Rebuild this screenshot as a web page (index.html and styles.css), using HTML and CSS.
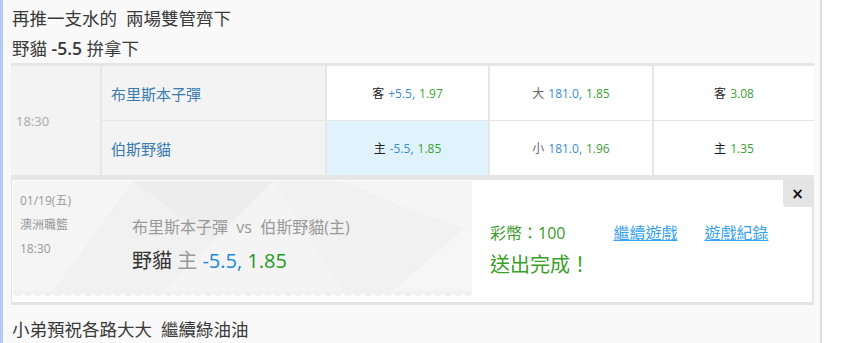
FILE: index.html
```html
<!DOCTYPE html>
<html lang="zh-Hant">
<head>
    <meta charset="UTF-8">
    <meta name="viewport" content="width=device-width, initial-scale=1.0">
    <title>再推一支水的</title>
    <link rel="stylesheet" href="styles.css">
</head>
<body>
    <div class="page">
        <div class="post">
            <p class="line">再推一支水的&nbsp;&nbsp;兩場雙管齊下</p>
            <p class="line">野貓 <b>-5.5</b> 拚拿下</p>

            <!-- game odds -->
            <div class="game">
                <div class="time">18:30</div>
                <div class="team">布里斯本子彈</div>
                <div class="odd">客 <span class="num">+5.5,</span> <span class="val">1.97</span></div>
                <div class="odd"><span class="ou">大</span> <span class="num">181.0,</span> <span class="val">1.85</span></div>
                <div class="odd">客 <span class="val">3.08</span></div>
                <div class="team">伯斯野貓</div>
                <div class="odd picked">主 <span class="num">-5.5,</span> <span class="val">1.85</span></div>
                <div class="odd"><span class="ou">小</span> <span class="num">181.0,</span> <span class="val">1.96</span></div>
                <div class="odd">主 <span class="val">1.35</span></div>
            </div>

            <!-- bet ticket -->
            <div class="ticket">
                <div class="ticket-body">
                    <div class="stub">
                        <svg class="stub-bg" width="459" height="110" viewBox="0 0 459 110">
                            <polygon points="0,0 120,0 40,110 0,110" fill="#f5f5f5"/>
                            <polygon points="120,0 260,0 200,60" fill="#ededed"/>
                            <polygon points="200,60 260,0 330,110 150,110" fill="#f4f4f4"/>
                            <polygon points="330,0 459,0 459,50 400,30" fill="#f5f5f5"/>
                            <polygon points="380,110 459,40 459,110" fill="#f6f6f6"/>
                        </svg>
                        <div class="stub-date">
                            <div>01/19(五)</div>
                            <div class="league">澳洲職籃</div>
                            <div>18:30</div>
                        </div>
                        <div class="stub-main">
                            <div class="match">布里斯本子彈&nbsp;&nbsp;vs&nbsp;&nbsp;伯斯野貓(主)</div>
                            <div class="pick">野貓 <span class="side">主</span> <span class="num">-5.5,</span> <span class="val">1.85</span></div>
                        </div>
                    </div>
                    <div class="result">
                        <div class="result-top">
                            <span class="coins">彩幣：100</span>
                            <a href="#" class="link">繼續遊戲</a>
                            <a href="#" class="link">遊戲紀錄</a>
                        </div>
                        <div class="done">送出完成！</div>
                    </div>
                    <button class="close">×</button>
                </div>
            </div>

            <p class="line">小弟預祝各路大大&nbsp;&nbsp;繼續綠油油</p>
        </div>
    </div>
</body>
</html>
```

FILE: styles.css
```css
body {
    margin: 0;
    background-color: #fff;
    font-family: "Open Sans", "Noto Sans CJK TC", sans-serif;
    color: #333;
}
.page {
    width: 817px;
    min-height: 343px;
    border-left: 3px solid #b5caf3;
    border-right: 2px solid #dedede;
    background-color: #f9f9f9;
}
.post {
    padding: 3px 6px 0 8px;
}
.line {
    margin: 0;
    padding-left: 1px;
    font-size: 17.5px;
    line-height: 30px;
    color: #3a3a3a;
}
.line b {
    font-weight: 600;
}
.game {
    display: grid;
    grid-template-columns: 89px 223px 161px 162px 160px;
    grid-template-rows: 54px 54px;
    column-gap: 2px;
    row-gap: 1px;
    padding: 3px 0 5px;
    background-color: #e6e6e6;
}
.time {
    grid-row: 1 / 3;
    display: flex;
    align-items: center;
    padding-left: 5px;
    background-color: #f3f3f3;
    color: #aaa;
    font-size: 13px;
}
.team {
    display: flex;
    align-items: center;
    padding-left: 9px;
    background-color: #f3f3f3;
    color: #3a7bb0;
    font-size: 15px;
}
.odd {
    display: flex;
    align-items: center;
    justify-content: center;
    gap: 4px;
    background-color: #fff;
    font-size: 12px;
    color: #222;
}
.odd.picked {
    background-color: #e0f3fc;
}
.odd .ou {
    color: #666;
}
.num {
    color: #3a8dd3;
}
.val {
    color: #3a9f35;
}
.ticket {
    padding: 0 2px 3px 1px;
    background-color: #e4e4e4;
}
.ticket-body {
    position: relative;
    display: flex;
    height: 122px;
    padding: 1px 0 0 1px;
    box-sizing: border-box;
    background-color: #fff;
}
.stub {
    position: relative;
    display: flex;
    width: 459px;
    height: 110px;
    background-color: #f1f1f1;
}
.stub::after {
    content: "";
    position: absolute;
    left: 0;
    right: 0;
    bottom: -5px;
    height: 5px;
    background: radial-gradient(circle at 5px 0, #f1f1f1 5px, transparent 5.5px) 0 0 / 10px 5px repeat-x;
}
.stub-bg {
    position: absolute;
    top: 0;
    left: 0;
}
.stub-date {
    position: relative;
    width: 112px;
    padding: 8px 0 0 7px;
    font-size: 12px;
    line-height: 24px;
    color: #999;
}
.stub-main {
    position: relative;
    padding-top: 34px;
}
.match {
    font-size: 16px;
    line-height: 24px;
    color: #999;
}
.pick {
    margin-top: 4px;
    font-size: 20px;
    line-height: 36px;
    color: #333;
}
.pick .side {
    color: #999;
}
.pick .num {
    color: #1a88d6;
}
.pick .val {
    color: #1c9a1c;
}
.result {
    padding: 40px 0 0 18px;
}
.result-top {
    display: flex;
    align-items: center;
    line-height: 24px;
}
.coins {
    font-size: 16px;
    color: #3b9a2a;
}
.link {
    margin-left: 48px;
    font-size: 16px;
    color: #36a3ee;
    text-decoration: underline;
}
.link + .link {
    margin-left: 27px;
}
.done {
    margin-top: 4px;
    font-size: 20px;
    line-height: 32px;
    color: #3aa02a;
}
.close {
    position: absolute;
    top: 0;
    right: 0;
    width: 29px;
    height: 27px;
    padding: 0;
    border: 0;
    border-radius: 0 0 0 4px;
    background-color: #e4e4e4;
    font-family: "DejaVu Sans", sans-serif;
    font-size: 15px;
    font-weight: bold;
    color: #111;
}
.post > .line:last-child {
    margin-top: 9px;
}
```
